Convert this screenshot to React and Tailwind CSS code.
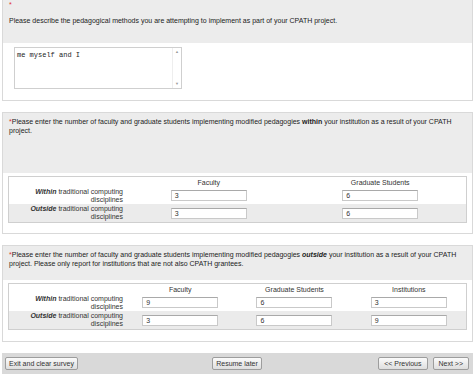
import React from "react";

const Req = () => <span className="text-[#e0322f]">*</span>;

const Box = ({ value }) => (
  <div className="w-[76px] h-[11px] bg-white border border-[#c9c9c9] border-t-[#a9a9a9] pl-[3px] leading-[9px] text-[7px] text-[#333]">
    {value}
  </div>
);

const Label = ({ word }) => (
  <div className="text-right leading-[8px] text-[#333] pl-[6px]">
    <b>
      <i>{word}</i>
    </b>{" "}
    traditional computing disciplines
  </div>
);

const Grid = ({ headers, rows }) => {
  const cols =
    headers.length === 2 ? "grid-cols-[114px_1fr_1fr]" : "grid-cols-[114px_1fr_1fr_1fr]";
  return (
    <div className="mx-[5px] border border-[#cfcfcf]">
      <div className={`grid ${cols} h-[10px] items-center`}>
        <div />
        {headers.map((h) => (
          <div key={h} className="text-center leading-[9px] text-[#333]">
            {h}
          </div>
        ))}
      </div>
      {rows.map((r, i) => (
        <div
          key={r.word}
          className={`grid ${cols} items-center ${i === 0 ? "h-[17px] bg-white" : "h-[18px] bg-[#ebebeb]"}`}
        >
          <Label word={r.word} />
          {r.values.map((v, j) => (
            <div key={j} className="flex justify-center">
              <Box value={v} />
            </div>
          ))}
        </div>
      ))}
    </div>
  );
};

const Btn = ({ children, className = "" }) => (
  <button
    className={`h-[13px] px-[3px] border border-[#9d9d9d] rounded-[2px] bg-gradient-to-b from-[#fbfbfb] to-[#dedede] text-[7px] leading-[11px] text-[#333] ${className}`}
  >
    {children}
  </button>
);

export default function App() {
  return (
    <div className="w-[476px] h-[378px] overflow-hidden bg-white font-['Liberation_Sans',Arial,sans-serif] text-[7px] text-[#222]">
      {/* question 1 */}
      <div className="mx-[2px] w-[471px] h-[101px] border border-t-0 border-[#d9d9d9]">
        <div className="h-[43px] bg-[#ececec] px-[6px]">
          <div className="leading-[9px]">
            <Req />
          </div>
          <p className="mt-[7px] leading-[9px]">
            Please describe the pedagogical methods you are attempting to implement as part of your CPATH project.
          </p>
        </div>
        <div className="pt-[4px] pl-[11px]">
          <div className="flex w-[168px] h-[42px] border border-[#cfcfcf] bg-white">
            <div className="flex-1 pl-[2px] pt-[3px] font-['Liberation_Mono',monospace] text-[7px] leading-[8px] text-[#222]">
              me myself and I
            </div>
            <div className="w-[9px] flex flex-col justify-between items-center py-[1px] text-[4px] leading-[6px] text-[#9a9a9a] border-l border-[#eeeeee]">
              <span>▲</span>
              <span>▼</span>
            </div>
          </div>
        </div>
      </div>

      {/* question 2 */}
      <div className="mx-[2px] mt-[11px] w-[471px] h-[122px] border border-[#d9d9d9]">
        <div className="h-[60px] bg-[#ececec] px-[6px] pt-[4px]">
          <p className="leading-[9px]">
            <Req />
            Please enter the number of faculty and graduate students implementing modified pedagogies{" "}
            <b>within</b> your institution as a result of your CPATH project.
          </p>
        </div>
        <div className="mt-[3px]">
          <Grid
            headers={["Faculty", "Graduate Students"]}
            rows={[
              { word: "Within", values: ["3", "6"] },
              { word: "Outside", values: ["3", "6"] },
            ]}
          />
        </div>
      </div>

      {/* question 3 */}
      <div className="mx-[2px] mt-[11px] w-[471px] h-[97px] border border-[#d9d9d9]">
        <div className="h-[34px] bg-[#ececec] px-[6px] pt-[4px]">
          <p className="leading-[9px]">
            <Req />
            Please enter the number of faculty and graduate students implementing modified pedagogies{" "}
            <b>
              <i>outside</i>
            </b>{" "}
            your institution as a result of your CPATH project. Please only report for institutions that are not also
            CPATH grantees.
          </p>
        </div>
        <div className="mt-[3px]">
          <Grid
            headers={["Faculty", "Graduate Students", "Institutions"]}
            rows={[
              { word: "Within", values: ["9", "6", "3"] },
              { word: "Outside", values: ["3", "6", "9"] },
            ]}
          />
        </div>
      </div>

      {/* footer */}
      <div className="mx-[2px] mt-[11px] w-[471px] h-[21px] bg-[#d9d9d9] flex items-center px-[3px]">
        <div className="flex-1 flex">
          <Btn>Exit and clear survey</Btn>
        </div>
        <div className="flex-1 flex justify-center">
          <Btn>Resume later</Btn>
        </div>
        <div className="flex-1 flex justify-end gap-[5px] pr-[1px]">
          <Btn className="px-[5px]">&lt;&lt; Previous</Btn>
          <Btn className="px-[5px]">Next &gt;&gt;</Btn>
        </div>
      </div>
    </div>
  );
}
